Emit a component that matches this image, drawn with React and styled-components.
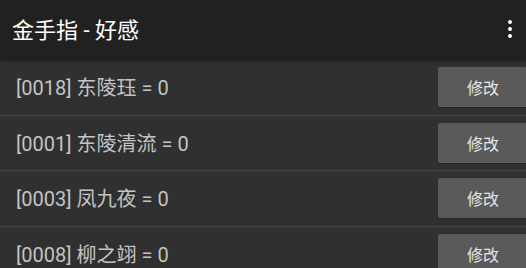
import React from "react";
import styled, { createGlobalStyle } from "styled-components";

const GlobalStyle = createGlobalStyle`
  html, body {
    margin: 0;
    padding: 0;
    background: #303030;
    overflow: hidden;
  }
  body {
    font-family: Roboto, "Noto Sans CJK SC", sans-serif;
  }
`;

const Screen = styled.div`
  width: 526px;
  height: 268px;
  background: #303030;
  overflow: hidden;
  display: flex;
  flex-direction: column;
`;

const AppBar = styled.header`
  height: 60px;
  flex: none;
  background: #212121;
  display: flex;
  align-items: center;
  justify-content: space-between;
  padding: 0 12px 0 12px;
  box-sizing: border-box;
  position: relative;
  z-index: 1;
  box-shadow: 0 1px 3px rgba(0, 0, 0, 0.45);
`;

const Title = styled.h1`
  margin: 0;
  margin-top: -4px;
  font-size: 22px;
  font-weight: 400;
  color: #ffffff;
`;

const MenuButton = styled.div`
  width: 20px;
  height: 30px;
  display: flex;
  flex-direction: column;
  align-items: center;
  justify-content: center;
  gap: 3px;
  margin-right: -6px;
  margin-top: -3px;
`;

const Dot = styled.span`
  width: 4px;
  height: 4px;
  border-radius: 50%;
  background: #ffffff;
`;

const List = styled.div`
  display: flex;
  flex-direction: column;
`;

const Row = styled.div`
  height: 54.5px;
  flex: none;
  display: flex;
  align-items: center;
  justify-content: space-between;
  padding-left: 16px;
  border-bottom: 1.5px solid #454545;
`;

const Label = styled.span`
  font-size: 20px;
  color: #c4c4c4;
  margin-top: -1px;
`;

const EditButton = styled.button`
  width: 90px;
  height: 40px;
  margin-right: -2px;
  border: none;
  border-radius: 2px;
  background: #5a5a5a;
  color: #e6e6e6;
  font-family: Roboto, "Noto Sans CJK SC", sans-serif;
  font-size: 16px;
  padding: 0;
  box-shadow: 0 1px 1px rgba(0, 0, 0, 0.25);
`;

const items = [
  { id: "0018", name: "东陵珏", value: 0 },
  { id: "0001", name: "东陵清流", value: 0 },
  { id: "0003", name: "凤九夜", value: 0 },
  { id: "0008", name: "柳之翊", value: 0 },
];

export default function App() {
  return (
    <Screen>
      <GlobalStyle />
      <AppBar>
        <Title>金手指 - 好感</Title>
        <MenuButton>
          <Dot />
          <Dot />
          <Dot />
        </MenuButton>
      </AppBar>
      <List>
        {items.map((it) => (
          <Row key={it.id}>
            <Label>
              [{it.id}] {it.name} = {it.value}
            </Label>
            <EditButton>修改</EditButton>
          </Row>
        ))}
      </List>
    </Screen>
  );
}
